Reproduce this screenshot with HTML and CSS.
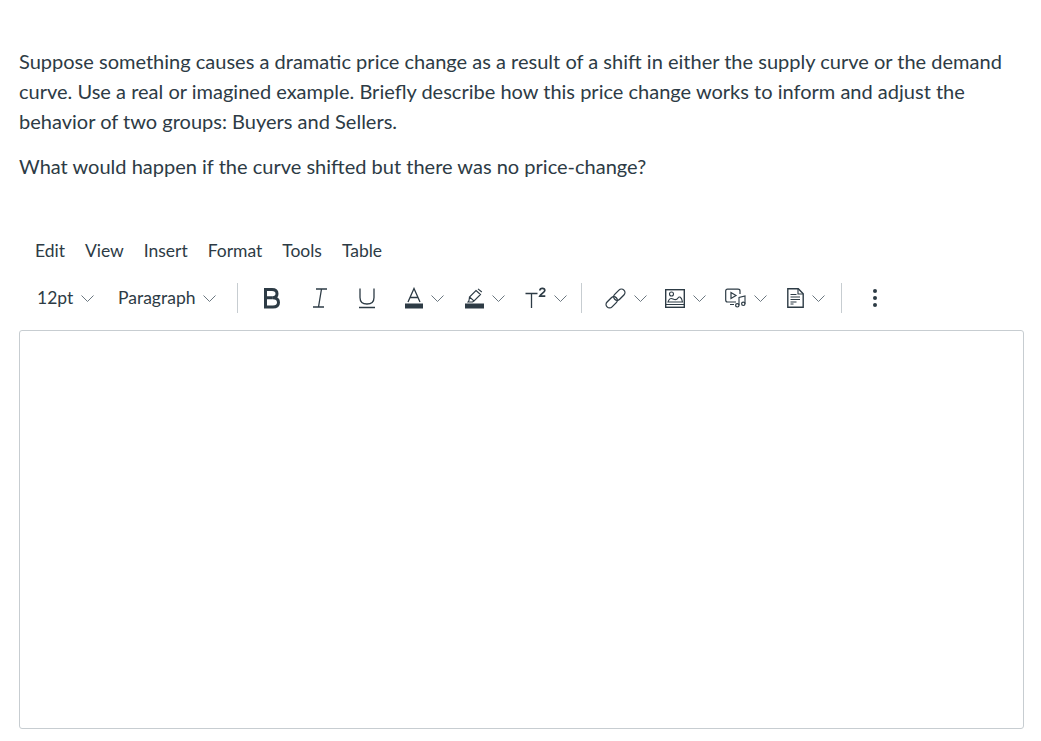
FILE: index.html
```html
<!DOCTYPE html>
<html lang="en">
<head>
<meta charset="utf-8">
<title>Discussion reply</title>
<link rel="stylesheet" href="styles.css">
</head>
<body>
<svg class="defs" width="0" height="0" aria-hidden="true"><symbol id="chev" viewBox="0 0 13 7"><path d="M.5.500 6.500 6.500 12.500.500" fill="none" stroke="#6b7780" stroke-width="1"/></symbol></svg>
<main class="page">
  <section class="prompt">
    <p>Suppose something causes a dramatic price change as a result of a shift in either the supply curve or the demand curve. Use a real or imagined example. Briefly describe how this price change works to inform and adjust the behavior of two groups: Buyers and Sellers.</p>
    <p>What would happen if the curve shifted but there was no price-change?</p>
  </section>
  <nav class="menubar">
    <span>Edit</span><span>View</span><span>Insert</span><span>Format</span><span>Tools</span><span>Table</span>
  </nav>
  <div class="toolbar">
    <div class="select s-size"><span class="label">12pt</span><svg class="chev"><use href="#chev"/></svg></div>
    <div class="select s-para"><span class="label">Paragraph</span><svg class="chev"><use href="#chev"/></svg></div>
    <i class="sep sep-a"></i>
    <div class="tool t-b"><svg width="18" height="22" viewBox="0 0 18 22"><path d="M2.500 2.500h6.500c3.300 0 5 1.500 5 4.300 0 2.300-1.500 3.800-4.300 4 3.600.1 5.800 1.800 5.800 4.700 0 3-2.200 4.500-5.600 4.500H2.500zM2.500 10.800h7" fill="none" stroke="#2d3b45" stroke-width="3"/></svg></div>
    <div class="tool t-i"><svg width="16" height="22" viewBox="0 0 16 22"><path d="M4 2h11M1 20h11M9.500 2 6.500 20" fill="none" stroke="#2d3b45" stroke-width="1.300"/></svg></div>
    <div class="tool t-u"><svg width="18" height="22" viewBox="0 0 18 22"><path d="M2 1.500v9c0 4.500 2.500 6.500 7 6.500s7-2 7-6.500v-9M1 20.500h16" fill="none" stroke="#2d3b45" stroke-width="1.300"/></svg></div>
    <div class="tool t-a"><svg width="18" height="22" viewBox="0 0 18 22"><path d="M3 15 9 1.500 15 15M5 10.500h8" fill="none" stroke="#2d3b45" stroke-width="1.300"/><rect y="16.500" width="18" height="5" fill="#2d3b45"/></svg><svg class="chev"><use href="#chev"/></svg></div>
    <div class="tool t-h"><svg width="19" height="22" viewBox="0 0 19 22"><path d="M11 3.500 15.500 7.500 9 14 4.500 10zM13 1.800l3.800 3.200M4.500 10 4 13.500 3 15h4.500l1.500-1" fill="none" stroke="#2d3b45" stroke-width="1.100"/><rect y="16.500" width="19" height="5" fill="#2d3b45"/></svg><svg class="chev"><use href="#chev"/></svg></div>
    <div class="tool t-s"><svg width="21" height="22" viewBox="0 0 21 22"><path d="M.5 6.500h12M6.500 6.500V21" fill="none" stroke="#2d3b45" stroke-width="1.300"/><path d="M14.800 3.500c.3-2.900 5-2.800 5 0 0 2-3.800 3-5 5.600h5.500" fill="none" stroke="#2d3b45" stroke-width="1.700"/></svg><svg class="chev"><use href="#chev"/></svg></div>
    <i class="sep sep-b"></i>
    <div class="tool t-l"><svg width="21" height="21" viewBox="0 0 21 21"><g fill="none" stroke="#2d3b45" stroke-width="1.300"><rect x="7.800" y="3.200" width="13" height="7" rx="3.500" transform="rotate(-45 14.300 6.700)"/><rect x=".2" y="10.800" width="13" height="7" rx="3.500" transform="rotate(-45 6.700 14.300)"/></g></svg><svg class="chev"><use href="#chev"/></svg></div>
    <div class="tool t-m"><svg width="20" height="19" viewBox="0 0 20 19"><g fill="none" stroke="#2d3b45"><rect x=".7" y=".7" width="18.600" height="17.600" stroke-width="1.400"/><path d="M.7 15.500h18.600" stroke-width="1"/><circle cx="6.500" cy="5" r="2" stroke-width="1.100"/><path d="M3 13c1-3 2.500-4.300 5-3s3.700 1.200 5-1 3.500-1 4.500 4z" stroke-width="1.100"/></g></svg><svg class="chev"><use href="#chev"/></svg></div>
    <div class="tool t-v"><svg width="21" height="20" viewBox="0 0 21 20"><g fill="none" stroke="#2d3b45"><path d="M11 14H2.500Q.7 14 .7 12V3Q.7 1.200 2.500 1.200h10.500q2 0 2 1.800v3" stroke-width="1.200"/><path d="M6 4.500v6l5-3z" stroke-width="1.200"/><path d="M5 16.500h4" stroke-width="1"/><circle cx="12.300" cy="17.300" r="1.700" stroke-width="1.200"/><circle cx="18.300" cy="15.800" r="1.700" stroke-width="1.200"/><path d="M14 17.300V9.500l6-1.500v7.800" stroke-width="1.100"/></g></svg><svg class="chev"><use href="#chev"/></svg></div>
    <div class="tool t-d"><svg width="17" height="20" viewBox="0 0 17 20"><g fill="none" stroke="#2d3b45"><path d="M.8.800h10.500l4.900 4.900v13.500H.8z" stroke-width="1.400"/><path d="M11 1v5h5" stroke-width="1.100"/><path d="M3.500 6.500h6M3.500 9h9.500M3.500 11.500h9.500M3.500 14h6M3.500 16h3" stroke-width="1.200"/></g></svg><svg class="chev"><use href="#chev"/></svg></div>
    <i class="sep sep-c"></i>
    <div class="more"><b></b><b></b><b></b></div>
  </div>
  <div class="editor" contenteditable="true" role="textbox" aria-label="Rich text area"></div>
</main>
</body>
</html>
```

FILE: styles.css
```css
html, body {
  margin: 0;
  padding: 0;
  background: #fff;
}
body {
  font-family: Lato, "Open Sans", sans-serif;
  color: #2d3b45;
  height: 741px;
  overflow: hidden;
}
.defs {
  position: absolute;
}
.page {
  padding: 46px 17px 0 19px;
}
.prompt {
  font-size: 20.02px;
  line-height: 30px;
}
.prompt p {
  margin: 0 0 15px;
}
.menubar {
  display: flex;
  gap: 20px;
  margin: 58px 0 0 16px;
  font-size: 17.5px;
  line-height: 24px;
  height: 24px;
  letter-spacing: -0.02px;
}
.toolbar {
  display: flex;
  align-items: center;
  height: 30px;
  margin-top: 20px;
  font-size: 17.5px;
  color: #2d3b45;
}
.select {
  display: flex;
  align-items: center;
  flex: none;
}
.label {
  padding-bottom: 2px;
}
.s-size {
  width: 81px;
  margin-left: 18px;
}
.s-para {
  width: 119px;
}
.select .chev {
  margin-left: 8px;
}
.chev {
  width: 13px;
  height: 7px;
  flex: none;
  overflow: visible;
}
.tool {
  display: flex;
  align-items: center;
  flex: none;
}
.tool .chev {
  margin-left: 8px;
}
.sep {
  display: block;
  flex: none;
  width: 1px;
  height: 30px;
  background: #c7cdd1;
}
.t-b { margin-left: 25px; width: 49px; }
.t-i { width: 46px; }
.t-u { width: 47px; }
.t-a { width: 60px; }
.t-h { width: 60px; }
.t-s { width: 56px; }
.t-l { margin-left: 23px; width: 60px; }
.t-m { width: 60px; }
.t-v { width: 62px; }
.t-d { width: 54px; }
.more {
  display: flex;
  flex-direction: column;
  gap: 3px;
  margin-left: 31px;
}
.more b {
  display: block;
  width: 4px;
  height: 4px;
  border-radius: 50%;
  background: #2d3b45;
}
.editor {
  box-sizing: border-box;
  height: 399px;
  margin-top: 17px;
  border: 1px solid #c7cdd1;
  border-radius: 3px;
  outline: none;
}
```
